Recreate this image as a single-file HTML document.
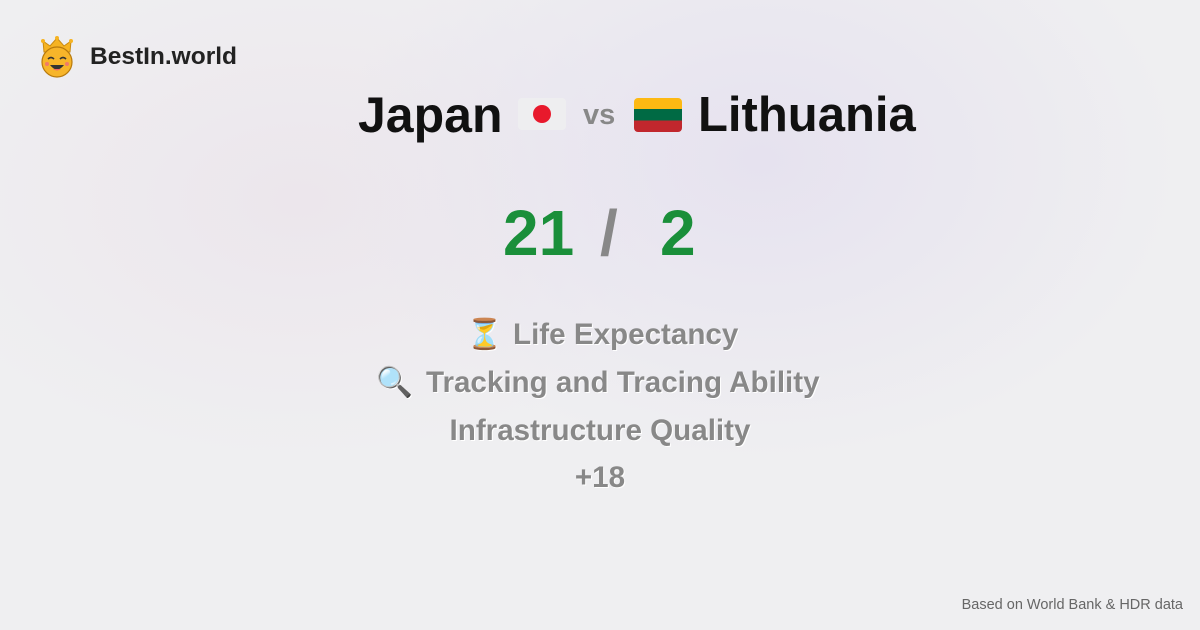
<!DOCTYPE html>
<html><head><meta charset="utf-8"><style>
body{margin:0;width:1200px;height:630px;overflow:hidden;font-family:"Liberation Sans",sans-serif;
background:radial-gradient(ellipse 420px 300px at 760px 160px,#e6e2ef,rgba(236,234,240,0) 100%),radial-gradient(ellipse 400px 260px at 300px 200px,#ece6ec,rgba(0,0,0,0) 100%),#efeff1;position:relative}
.abs{position:absolute;white-space:nowrap}
.logo{left:90px;top:43px;font-size:24.5px;font-weight:bold;color:#222}
.t{font-size:50px;font-weight:bold;color:#111;top:86px}
.vs{font-size:29px;color:#888;font-weight:bold;left:583px;top:99px}
.sc{font-size:64px;font-weight:bold;color:#1a8f3a;top:196px}
.item{font-size:29.6px;font-weight:bold;color:#888;text-shadow:1px 1px 0 #fff}
.foot{right:17px;top:597px;font-size:14.5px;color:#666}
</style></head><body>
<svg class="abs" style="left:38px;top:36px" width="38" height="42" viewBox="0 0 38 42">
<path d="M6 16 L5 5 L12 10 L19 2 L26 10 L33 5 L32 16 Z" fill="#f6b322" stroke="#c98a10" stroke-width="1"/>
<circle cx="5" cy="5" r="2" fill="#f6b322"/><circle cx="19" cy="2" r="2" fill="#f6b322"/><circle cx="33" cy="5" r="2" fill="#f6b322"/>
<circle cx="19" cy="26" r="15" fill="#f7b52a" stroke="#b87a0c" stroke-width="1.2"/>
<path d="M10 23 q3-3 6 0 M22 23 q3-3 6 0" stroke="#333" stroke-width="1.6" fill="none"/>
<path d="M12 29 q7 9 14 0 z" fill="#333"/><path d="M15 33 q4 3 8 0" fill="#e66"/>
<circle cx="9" cy="28" r="2" fill="#f07a6a"/><circle cx="29" cy="28" r="2" fill="#f07a6a"/>
</svg>
<div class="abs logo">BestIn.world</div>
<div class="abs t" style="left:358px">Japan</div>
<div class="abs" style="left:518px;top:98px;width:48px;height:32px;background:#eeeef0;border-radius:4px"><i style="position:absolute;left:15px;top:7px;width:18px;height:18px;border-radius:50%;background:#e8192c"></i></div>
<div class="abs vs">vs</div>
<div class="abs" style="left:634px;top:98px;width:48px;height:34px;border-radius:4px;overflow:hidden;background:linear-gradient(#fdb913 0 33%,#006a44 33% 66%,#c1272d 66%)"></div>
<div class="abs t" style="left:698px;font-size:49px;top:87px">Lithuania</div>
<div class="abs sc" style="left:503px">21</div>
<div class="abs sc" style="left:600px;color:#888">/</div>
<div class="abs sc" style="left:660px">2</div>
<div class="abs item" style="left:466px;top:318px">⏳</div>
<div class="abs item" style="left:513px;top:318px">Life Expectancy</div>
<div class="abs item" style="left:376px;top:366px">🔍</div>
<div class="abs item" style="left:426px;top:366px">Tracking and Tracing Ability</div>
<div class="abs item" style="left:0;width:1200px;text-align:center;top:414px">Infrastructure Quality</div>
<div class="abs item" style="left:0;width:1200px;text-align:center;top:461px">+18</div>
<div class="abs foot">Based on World Bank &amp; HDR data</div>
</body></html>
